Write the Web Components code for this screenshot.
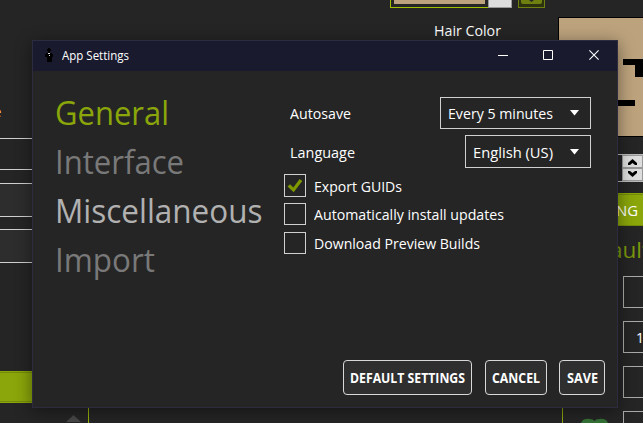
<!DOCTYPE html>
<html lang="en">
<head>
<meta charset="utf-8">
<title>App Settings</title>
<style>
html,body{margin:0;width:643px;height:423px;overflow:hidden;background:#252525;color:#fff;font:15px/20px "Open Sans","Noto Sans",sans-serif}
</style>
</head>
<body>
<app-root></app-root>
<script>
const define=(name,html,setup)=>customElements.define(name,class extends HTMLElement{
  connectedCallback(){
    if(this.shadowRoot)return;
    const t=document.createElement('template');
    t.innerHTML=html;
    this.attachShadow({mode:'open'}).append(t.content.cloneNode(true));
    if(setup)setup(this,this.shadowRoot);
  }
});

// A single line of text scaled horizontally to the width given in "w".
define('fit-text',`<style>
:host{display:block;white-space:nowrap;flex:none}
span{display:inline-block;transform-origin:0 50%}
</style><span><slot></slot></span>`,(el,root)=>{
  const w=+el.getAttribute('w'),s=root.querySelector('span');
  el.style.width=w+'px';
  s.style.transform='scaleX('+w/s.getBoundingClientRect().width+')';
});

define('nav-item',`<style>
:host{display:block;height:49px;font-size:33.5px;line-height:49px;color:#797979}
:host([active]){color:#8aa60a}
:host([hover]){color:#b1b1b1}
</style><slot></slot>`);

define('drop-down',`<style>
:host{box-sizing:border-box;display:flex;align-items:center;justify-content:space-between;border:1px solid #d0d0d0;padding:0 11px 0 7px;background:#252525}
svg{display:block}
</style><slot></slot><svg width="9" height="6"><path d="M0 0H9L4.5 5.5Z" fill="#fff"/></svg>`);

define('check-row',`<style>
:host{display:flex;align-items:center;gap:8px;height:22px}
:host([checked]){height:23px}
i{box-sizing:border-box;width:22px;height:100%;border:1px solid #d0d0d0;display:block}
svg{display:none}
:host([checked]) svg{display:block}
</style><i><svg width="20" height="21"><path d="M2.500 11.500 5 9.200 8.300 12.500 14.700 4 17.300 6 8.700 17.200Z" fill="#7e9800"/></svg></i><slot></slot>`);

define('push-button',`<style>
:host{box-sizing:border-box;display:flex;align-items:center;justify-content:center;height:35px;border:1px solid #d8d8d8;border-radius:4px;background:#2f2f2f;font-weight:700;font-size:14px}
</style><slot></slot>`);

define('title-bar',`<style>
:host{display:flex;height:30px;background:#191a2e;font-size:12px;line-height:30px}
.logo{margin:7px 9px 0 12px}
.sys{margin-left:auto;margin-top:8px;margin-right:18px;display:flex;gap:35px}
.sys svg:last-child{margin-left:1px}
svg{display:block}
</style>
<svg class="logo" width="8" height="14"><path d="M3 0H5V1H6V3H5V5H7V6H8V9H7V14H2V9H0V6H1V5H3V3H2V1H3Z" fill="#000"/><path d="M3 5H5V6H3ZM4 7H5V8H4Z" fill="#ddd"/></svg>
<slot></slot>
<div class="sys">
<svg width="10" height="12"><path d="M0 6.5H10" stroke="#fff"/></svg>
<svg width="10" height="12"><path d="M.5 1.5H9.500V10.500H.5Z" fill="none" stroke="#fff"/></svg>
<svg width="10" height="12"><path d="M.4 1.400 9.600 10.600M9.600 1.400.4 10.600" fill="none" stroke="#fff" stroke-width="1.100"/></svg>
</div>`);

define('settings-window',`<style>
:host{box-sizing:border-box;display:flex;flex-direction:column;width:586px;height:368px;border:1px solid #2c2b40;background:#252525;box-shadow:0 3px 16px rgba(0,0,0,.45)}
.body{display:flex;padding-top:15px}
nav{width:207px;margin-left:22px;padding-top:2px}
.options{display:flex;flex-direction:column;gap:6px;padding-top:11px;margin-left:22px;width:307px}
.field{display:flex;justify-content:space-between;padding-left:6px;align-items:center}
.field drop-down{height:32px;width:151px}
.field.lang drop-down{height:33px;width:126px}
check-row+check-row+check-row{margin-top:1px}
footer{display:flex;justify-content:flex-end;margin:auto 12px 12px 0}
footer push-button:nth-child(1){width:129px;margin-right:13px}
footer push-button:nth-child(2){width:62px;margin-right:12px}
footer push-button:nth-child(3){width:46px}
</style>
<title-bar><fit-text w="67">App Settings</fit-text></title-bar>
<div class="body">
<nav>
<nav-item active><fit-text w="114">General</fit-text></nav-item>
<nav-item><fit-text w="129">Interface</fit-text></nav-item>
<nav-item hover><fit-text w="207.500">Miscellaneous</fit-text></nav-item>
<nav-item><fit-text w="100">Import</fit-text></nav-item>
</nav>
<div class="options">
<div class="field"><fit-text w="61">Autosave</fit-text><drop-down><fit-text w="105">Every 5 minutes</fit-text></drop-down></div>
<div class="field lang"><fit-text w="65">Language</fit-text><drop-down><fit-text w="80">English (US)</fit-text></drop-down></div>
<check-row checked><fit-text w="88">Export GUIDs</fit-text></check-row>
<check-row><fit-text w="190">Automatically install updates</fit-text></check-row>
<check-row><fit-text w="166">Download Preview Builds</fit-text></check-row>
</div>
</div>
<footer>
<push-button><fit-text w="115">DEFAULT SETTINGS</fit-text></push-button>
<push-button><fit-text w="48">CANCEL</fit-text></push-button>
<push-button><fit-text w="31">SAVE</fit-text></push-button>
</footer>`);

define('editor-left',`<style>
:host{display:flex;flex-direction:column;width:90px;height:423px;overflow:hidden}
.e{height:20px;margin:101px 0 17px -7px;color:#ffc870}
div{box-sizing:border-box;flex:none}
.in{border:1px solid #d0d0d0;border-width:1px 0;background:#2d2d2d}
.btn{height:32px;margin-top:108px;background:#8aa60a;border:solid #8aa60a;border-width:1px 0;box-shadow:inset 0 1px #748b08,inset 0 -1px #748b08}
.end{height:20px;border-right:1px solid #94b308;width:89px}
svg{display:block;margin:12px 0 0 66px}
</style>
<div class="e">e</div>
<div class="in" style="height:32px;background:none"></div>
<div class="in" style="height:34px;margin-top:13px"></div>
<div class="in" style="height:34px;margin-top:12px"></div>
<div class="btn"></div>
<div class="end"><svg width="15" height="8"><path d="M0 7 7.500 0 15 7Z" fill="#484848"/></svg></div>`);

define('editor-top',`<style>
:host{display:block;flex:1}
.bar{display:flex;height:8px;margin-left:300px}
div{box-sizing:border-box}
.sw{width:98px;border:solid #a0c000;border-width:0 0 1px 1px;padding:0 0 3px 3px}
.sw div{height:4px;background:#bda37d;width:91px}
.gr{width:24px;border:1px solid #999;border-top:0;background:#ddd}
.ol{width:27px;margin-left:6px;border:1px solid #6e8010;border-top:0;background:#2c3210}
svg{display:block}
fit-text{margin:12px 0 0 344px}
.edge{height:383px;width:473px;border-right:1px solid #8aa60a}
</style>
<div class="bar"><div class="sw"><div></div></div><div class="gr"></div><div class="ol"><svg width="25" height="7"><path d="M2 0H23V2Q23 4 21 4H4Q2 4 2 2Z" fill="#6e8010"/><path d="M10 0H15L12.500 2Z" fill="#252525"/></svg></div></div>
<fit-text w="67">Hair Color</fit-text><div class="edge"></div>`);

define('editor-right',`<style>
:host{display:flex;flex-direction:column;width:85px;height:423px;overflow:hidden}
*{box-sizing:border-box;flex:none}
svg{display:block}
.canvas{margin-top:17px}
.spin{height:28px;margin:17px 0 0 50px;border:1px solid #bbb;border-width:1px 0;padding:0 0 0 14px;display:flex;flex-direction:column}
.spin svg{background:#ddd;border:1px solid #999}
.btn{display:flex;height:33px;margin-top:11px;padding-left:58px;background:#8aa60a;line-height:34px;box-shadow:inset 0 1px #8aa60a,inset 0 2px #748b08,inset 0 -1px #748b08}
.h{height:30px;margin:8px 0 12px 52px;font-size:22px;line-height:30px;color:#7c980c}
.in{height:32px;margin:0 -5px 13px 65px;border:1px solid #aaa;padding-left:12px;line-height:31px}
.last{display:flex;width:90px;height:12px}
.last svg{margin:7px 15px 0 23px}
.last div{flex:1;border:1px solid #aaa;border-bottom:0}
</style>
<svg class="canvas" width="85" height="120"><path d="M0 0H85V120H0Z" fill="#000"/><path d="M1 1H85V119H1Z" fill="#bda37d"/><path d="M65 42H85V60H77V48H65ZM57 83H77V89H57Z" fill="#000"/></svg>
<div class="spin"><svg width="21" height="13"><path d="M5 9V7L9.500 3 14 7V9H12L9.500 7 7 9Z"/></svg><svg width="21" height="13"><path d="M5 2V4L9.500 8 14 4V2H12L9.500 4 7 2Z"/></svg></div>
<div class="btn"><fit-text w="22">NG</fit-text></div>
<div class="h"><fit-text w="40">ault</fit-text></div>
<div class="in"></div><div class="in"><fit-text w="8">1</fit-text></div><div class="in"></div>
<div class="last"><svg width="27" height="8"><path d="M0 5Q2 0 9 1Q12 1 13.500 3Q15 1 18 1Q25 0 27 5V8H0Z" fill="#357336"/></svg><div></div></div>`);

define('app-root',`<style>
:host{display:block;position:relative;width:643px;height:423px;overflow:hidden}
.desk{display:flex;width:643px;height:423px}
editor-top{min-width:0;width:468px}
settings-window{position:absolute;left:32px;top:40px}
</style>
<div class="desk"><editor-left></editor-left><editor-top></editor-top><editor-right></editor-right></div>
<settings-window></settings-window>`);
</script>
</body>
</html>
